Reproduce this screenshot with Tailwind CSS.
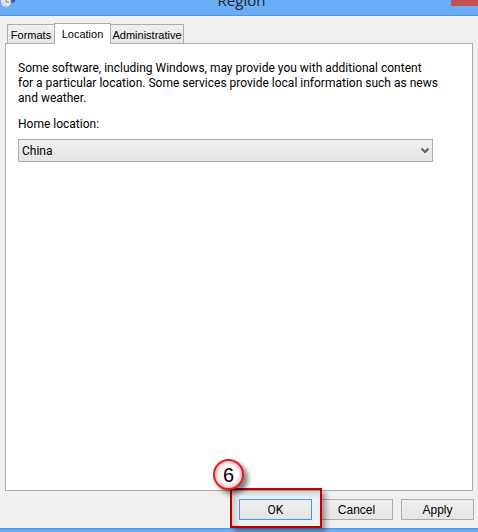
<!DOCTYPE html>
<html lang="en">
<head>
  <meta charset="UTF-8" />
  <meta name="viewport" content="width=device-width, initial-scale=1" />
  <title>Region</title>
  <script src="https://cdn.jsdelivr.net/npm/@tailwindcss/browser@4"></script>
</head>
<body class="flex min-h-screen flex-col overflow-x-hidden bg-[#f0f0f0] font-['Roboto','Noto_Sans',sans-serif] text-xs text-black">
  <!-- Title bar -->
  <header class="flex h-4 items-end justify-between overflow-hidden border-b border-[#5493dc] bg-[#6aaef8]">
    <svg class="h-4 w-4 shrink-0" viewBox="0 0 16 16" aria-hidden="true">
      <path d="M9 0h6v2l-2 2H9z" fill="#3454b4" />
      <path d="M12 0h2v1h-2z" fill="#9db8ee" />
      <circle cx="6" cy="3" r="5" fill="#e4e9ee" stroke="#b5b9c2" />
      <path d="M6 0v3h3" fill="none" stroke="#7a8494" />
      <path d="M3 4h1M5 6h1" stroke="#9aa" />
    </svg>
    <h1 class="pb-[5px] pl-4 font-['Open_Sans',sans-serif] text-[15px] leading-5 text-[#222]">Region</h1>
    <button type="button" aria-label="Close" class="mb-[9px] h-4 w-[27px] bg-[#c75050]"></button>
  </header>

  <main class="flex flex-1 flex-col px-[5px] pt-[7px]">
    <!-- Tabs -->
    <div role="tablist" class="relative -mb-px flex items-end pl-[2px]">
      <button type="button" role="tab" class="mb-px h-[19px] w-12 border border-b-0 border-[#acacac] bg-linear-to-b from-[#f0f0f0] to-[#e5e5e5] pt-px font-['Liberation_Sans',sans-serif] text-[11px] leading-4">Formats</button>
      <button type="button" role="tab" aria-selected="true" class="-mx-px h-[21px] w-[57px] border border-b-0 border-[#acacac] bg-white pb-px font-['Liberation_Sans',sans-serif] text-[11px] leading-4">Location</button>
      <button type="button" role="tab" class="mb-px h-[19px] w-[74px] border border-b-0 border-[#acacac] bg-linear-to-b from-[#f0f0f0] to-[#e5e5e5] pt-px font-['Liberation_Sans',sans-serif] text-[11px] leading-4 whitespace-nowrap">Administrative</button>
    </div>

    <!-- Location page -->
    <section role="tabpanel" class="flex-1 border border-[#acacac] bg-white pt-[17px] pr-[39px] pl-3">
      <p class="leading-[15px] whitespace-nowrap">
        Some software, including Windows, may provide you with additional content<br />
        for a particular location. Some services provide local information such as news<br />
        and weather.
      </p>
      <label for="home-location" class="mt-[11px] block leading-[15px]">Home location:</label>
      <div class="relative mt-[7px]">
        <select id="home-location" class="h-[23px] w-full appearance-none border border-[#acacac] bg-linear-to-b from-[#f0f0f0] to-[#e5e5e5] px-[3px] leading-4">
          <option>China</option>
        </select>
        <svg class="pointer-events-none absolute top-2 right-1 h-2 w-2" viewBox="0 0 8 8" aria-hidden="true">
          <path d="M0.500 1.500L4 5L7.500 1.500" fill="none" stroke="#606060" stroke-width="2" />
        </svg>
      </div>
    </section>

    <!-- Dialog buttons -->
    <div class="-mr-px flex justify-end gap-2 py-2">
      <div class="relative z-10">
        <div class="pointer-events-none absolute -top-[11px] -right-[10px] -bottom-2 -left-[9px] border-2 border-[#c00000] shadow-[4px_4px_5px_rgba(0,0,0,0.35),inset_4px_4px_5px_rgba(0,0,0,0.15)]"></div>
        <button type="button" class="relative block h-[21px] w-[73px] border border-[#3399ff] bg-linear-to-b from-[#f0f0f0] to-[#e5e5e5] leading-4">OK</button>
        <span class="absolute -top-10 -left-[26px] flex h-[31px] w-[31px] items-center justify-center rounded-full border-2 border-[#e31b23] bg-white font-['Liberation_Sans',sans-serif] text-xl shadow-[4px_4px_5px_rgba(0,0,0,0.5),inset_0_0_5px_rgba(227,27,35,0.6)]">6</span>
      </div>
      <button type="button" class="h-[21px] w-[73px] border border-[#acacac] bg-linear-to-b from-[#f0f0f0] to-[#e5e5e5] font-['Liberation_Sans',sans-serif] leading-4">Cancel</button>
      <button type="button" class="h-[21px] w-[73px] border border-[#acacac] bg-linear-to-b from-[#f0f0f0] to-[#e5e5e5] font-['Liberation_Sans',sans-serif] leading-4">Apply</button>
    </div>
  </main>

  <footer class="h-1 border-t border-[#5493dc] bg-[#6aaef8]"></footer>
</body>
</html>
